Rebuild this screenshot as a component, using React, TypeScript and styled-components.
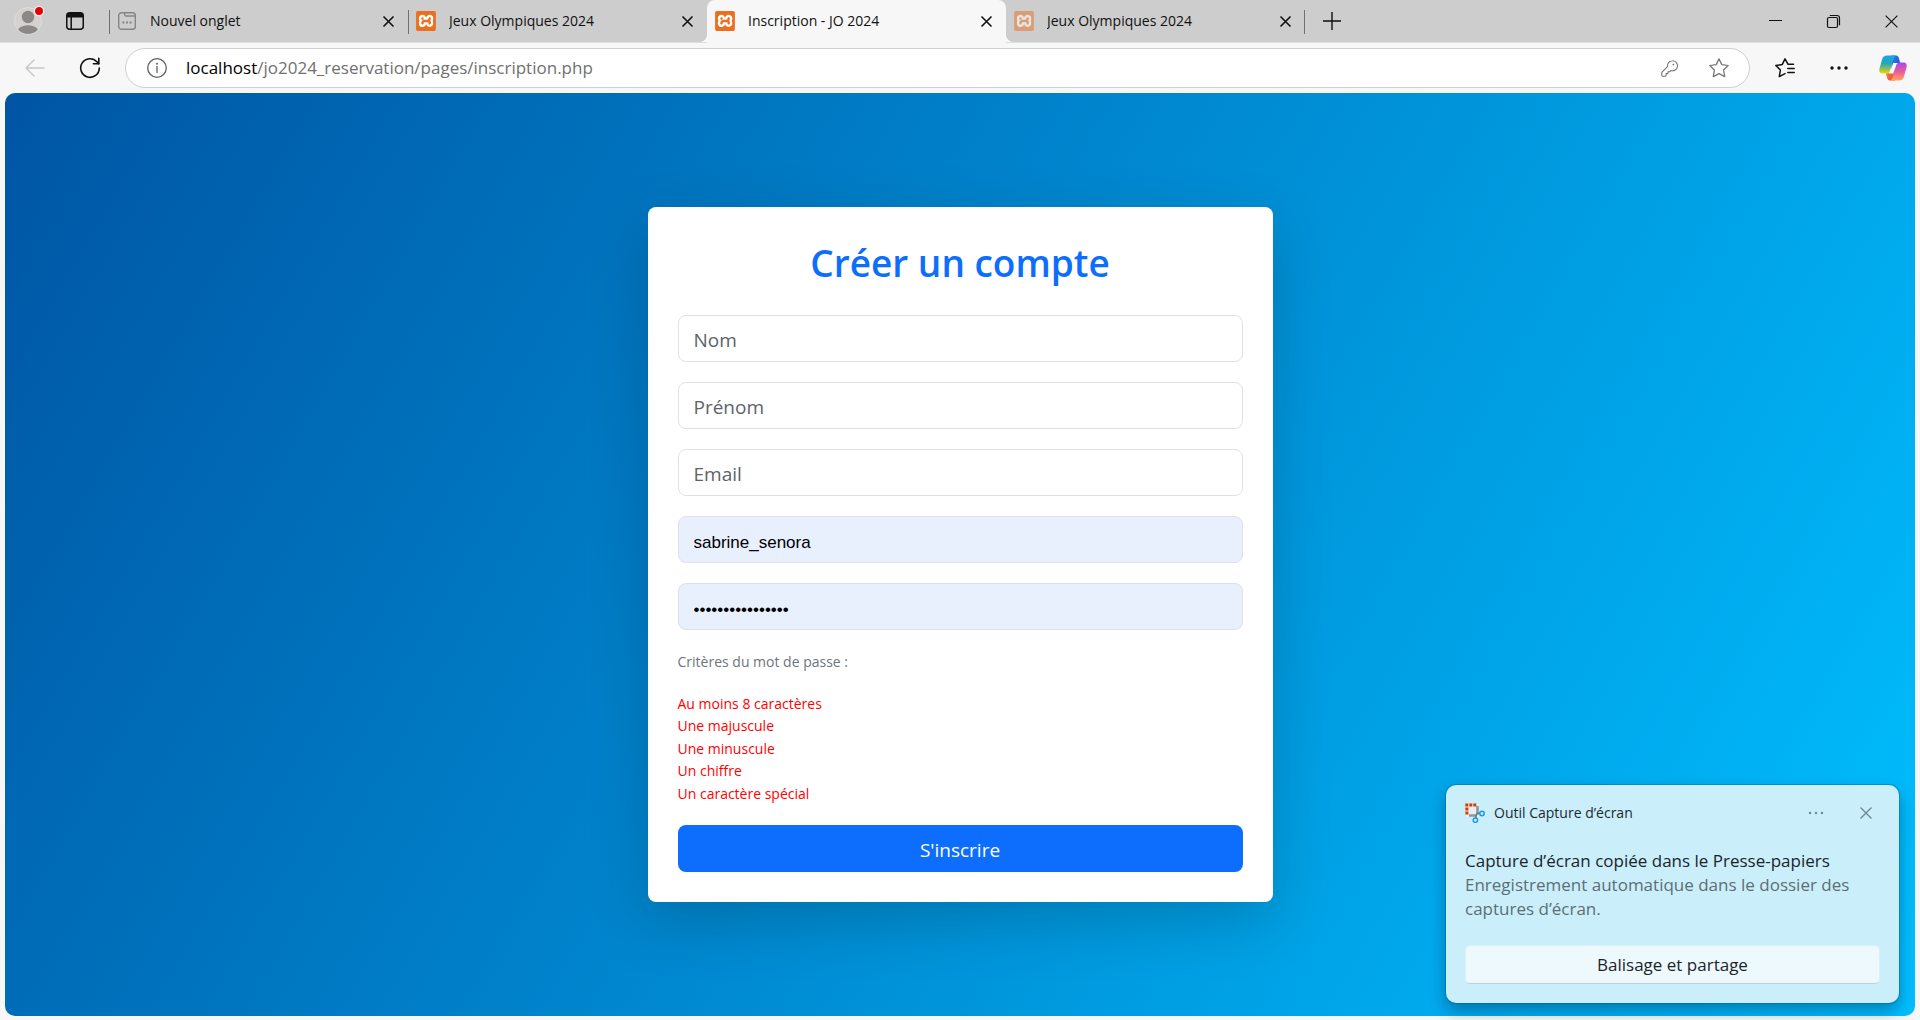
import React from 'react';
import styled, { createGlobalStyle, css } from 'styled-components';
import { SiXampp } from 'react-icons/si';

const uiFont = '"Open Sans", "Noto Sans", sans-serif';

const GlobalStyle = createGlobalStyle`
  *, *::before, *::after { box-sizing: border-box; }
  body { margin: 0; background: #f7f7f7; font-family: ${uiFont}; color: #111; }
  button, input { font-family: inherit; margin: 0; }
`;

const Shell = styled.div`
  position: relative;
  display: flex;
  flex-direction: column;
  min-height: 100vh;
  padding-bottom: 4px;
`;

const IconButton = styled.button<{ $w?: number; $color?: string }>`
  display: inline-flex;
  align-items: center;
  justify-content: center;
  flex: none;
  width: ${(p) => p.$w ?? 32}px;
  height: 32px;
  padding: 0;
  border: 0;
  background: none;
  color: ${(p) => p.$color ?? '#111'};
  svg { display: block; overflow: visible; }
`;

/* ---------- tab strip ---------- */

const TabStrip = styled.header`
  display: flex;
  align-items: center;
  height: 43px;
  background: #cdcdcd;
  border-bottom: 1px solid #dedede;
`;

const StripStart = styled.div`
  display: flex;
  align-items: center;
  gap: 6px;
  width: 109px;
  padding-left: 12px;
  flex: none;
`;

const Tabs = styled.nav`
  display: flex;
  align-self: stretch;
  min-width: 0;
`;

const Tab = styled.div<{ $active?: boolean; $line?: 'left' | 'right' }>`
  position: relative;
  display: flex;
  align-items: center;
  flex: 0 1 299px;
  width: 299px;
  min-width: 0;
  padding: 0 4px 0 8px;
  ${(p) => p.$line && css`
    &::before {
      content: '';
      position: absolute;
      top: 10px;
      bottom: 8px;
      ${p.$line}: 0;
      width: 1px;
      background: #707070;
    }
  `}
  ${(p) => p.$active && css`
    margin-bottom: -1px;
    padding-bottom: 1px;
    background: #f7f7f7;
    border-radius: 8px 8px 0 0;
    &::before, &::after {
      content: '';
      position: absolute;
      bottom: 1px;
      width: 8px;
      height: 8px;
    }
    &::before { right: 100%; background: radial-gradient(circle at 0 0, transparent 8px, #f7f7f7 8px); }
    &::after { left: 100%; background: radial-gradient(circle at 100% 0, transparent 8px, #f7f7f7 8px); }
  `}
`;

const TabTitle = styled.a`
  flex: 1;
  min-width: 0;
  margin-left: 13px;
  overflow: hidden;
  white-space: nowrap;
  font-size: 14px;
  line-height: 20px;
  color: #111;
  text-decoration: none;
`;

const Favicon = styled.span<{ $dim?: boolean }>`
  display: flex;
  flex: none;
  width: 20px;
  height: 20px;
  border-radius: 2px;
  color: #ec6f1f;
  background: linear-gradient(#fff, #fff) center / 14px 14px no-repeat;
  opacity: ${(p) => (p.$dim ? 0.5 : 1)};
  svg { width: 20px; height: 20px; }
`;

const WindowControls = styled.div`
  display: flex;
  align-self: flex-start;
  margin-left: auto;
  padding-top: 5px;
`;

/* ---------- toolbar ---------- */

const Toolbar = styled.div`
  display: flex;
  align-items: center;
  height: 50px;
  padding: 0 11px 0 17px;
`;

const ToolGroup = styled.div<{ $gap: number }>`
  display: flex;
  gap: ${(p) => p.$gap}px;
  flex: none;
`;

const AddressBar = styled.div`
  display: flex;
  align-items: center;
  flex: 1;
  min-width: 0;
  height: 40px;
  margin: 0 19px 0 17px;
  padding: 0 14px 0 15px;
  border: 1px solid #d0d0d0;
  border-radius: 20px;
  background: #fff;
`;

const Url = styled.div`
  flex: 1;
  min-width: 0;
  margin-left: 13px;
  overflow: hidden;
  white-space: nowrap;
  font-size: 17px;
  line-height: 24px;
  color: #707070;
`;

const Host = styled.span`
  color: #000;
`;

/* ---------- page ---------- */

const Page = styled.main`
  display: flex;
  align-items: center;
  justify-content: center;
  flex: 1;
  margin: 0 5px;
  padding: 40px 20px;
  border-radius: 10px;
  background: linear-gradient(120deg, #0055a4, #00bfff);
`;

const Card = styled.form`
  display: flex;
  flex-direction: column;
  gap: 20px;
  width: 100%;
  max-width: 625px;
  padding: 30px;
  border-radius: 8px;
  background: #fff;
  box-shadow: 0 20px 60px rgba(0, 0, 0, 0.18);
`;

const Heading = styled.h1`
  margin: 0 0 8px;
  padding-top: 2px;
  font-size: 37px;
  font-weight: 600;
  line-height: 48px;
  text-align: center;
  color: #0d6efd;
`;

const Field = styled.input<{ $filled?: boolean }>`
  width: 100%;
  height: 47px;
  padding: 4px 15px 2px;
  border: 1px solid #dee2e6;
  border-radius: 8px;
  background: #fff;
  color: #000;
  font-size: 19px;
  outline: 0;
  &::placeholder { color: #5d6369; opacity: 1; }
  ${(p) => p.$filled && css`
    padding-top: 8px;
    background: #e8f0fe;
    font-family: "Liberation Sans", Arial, sans-serif;
    font-size: 17px;
  `}
`;

const Criteria = styled.section`
  font-size: 14px;
`;

const CriteriaTitle = styled.p`
  margin: 0 0 20px;
  line-height: 23px;
  color: #6c757d;
`;

const CriteriaList = styled.ul`
  margin: 0;
  padding: 0;
  list-style: none;
  line-height: 22px;
  color: #f00;
`;

const Criterion = styled.li`
  &:nth-child(even) { padding-bottom: 1px; }
`;

const Submit = styled.button`
  height: 47px;
  padding: 2px 15px 0;
  border: 0;
  border-radius: 8px;
  background: #0d6efd;
  color: #fff;
  font-size: 19px;
`;

/* ---------- notification ---------- */

const Toast = styled.aside`
  position: absolute;
  right: 21px;
  bottom: 17px;
  width: 453px;
  padding: 12px 19px 19px;
  border-radius: 10px;
  background: #cbeefb;
  box-shadow: 0 0 0 1px rgba(0, 80, 120, 0.3), 0 8px 16px rgba(0, 40, 80, 0.4);
`;

const ToastHeader = styled.div`
  display: flex;
  align-items: center;
  gap: 9px;
  margin-right: -2px;
  font-size: 14px;
  line-height: 20px;
  color: #1c2b30;
`;

const ToastApp = styled.span`
  flex: 1;
`;

const ToastActions = styled.div`
  display: flex;
  gap: 18px;
`;

const ToastText = styled.p<{ $muted?: boolean }>`
  margin: 0;
  font-size: 17px;
  line-height: 24px;
  color: ${(p) => (p.$muted ? '#5b6e75' : '#1a2529')};
`;

const ToastBody = styled.div`
  padding: 20px 0 24px;
`;

const ToastAction = styled.button`
  display: block;
  width: 100%;
  height: 39px;
  border: 1px solid #d9f0f7;
  border-bottom-color: #b9d2da;
  border-radius: 5px;
  background: #eef9fd;
  color: #1a2529;
  font-size: 17px;
`;

/* ---------- icons ---------- */

const CloseIcon = ({ size = 11, width = 1.6 }: { size?: number; width?: number }) => (
  <svg width={size} height={size} viewBox="0 0 11 11" fill="none" stroke="currentColor" strokeWidth={width}>
    <path d="M.5 .5 10.5 10.5M10.5 .5 .5 10.5" />
  </svg>
);

const ProfileIcon = () => (
  <svg width="32" height="32" viewBox="0 0 32 32">
    <clipPath id="avatar"><circle cx="16" cy="16" r="13" /></clipPath>
    <circle cx="16" cy="16" r="13.5" fill="#d4d2d0" stroke="#dfddda" />
    <g clipPath="url(#avatar)" fill="#8b8886">
      <circle cx="16" cy="12" r="6.2" />
      <ellipse cx="16" cy="26.5" rx="10.5" ry="6.3" />
    </g>
    <circle cx="27" cy="6" r="4.6" fill="#e60000" stroke="#f3f3f3" strokeWidth="1.2" />
  </svg>
);

const WorkspaceIcon = () => (
  <svg width="18" height="18" viewBox="0 0 18 18" fill="none" stroke="#111" strokeWidth="1.5">
    <rect x=".75" y=".75" width="16.5" height="16.5" rx="3" />
    <path d="M5.2 5v12" />
    <path d="M1 5.6V3.5Q1 1 3.5 1h11Q17 1 17 3.5v2.1z" fill="#111" stroke="none" />
  </svg>
);

const NewTabIcon = () => (
  <svg width="20" height="20" viewBox="0 0 20 20" fill="none" stroke="#858585" strokeWidth="1.4">
    <rect x="1.7" y="1.7" width="16.6" height="16.6" rx="2.8" />
    <path d="M7.6 1.7v1.7q0 1.6 1.6 1.6h9" />
    <path d="M5.4 11.4h2M9 11.4h2M12.6 11.4h2" strokeWidth="2" />
  </svg>
);

const BackIcon = () => (
  <svg width="20" height="18" viewBox="0 0 20 18" fill="none" stroke="currentColor" strokeWidth="1.3" strokeLinecap="round" strokeLinejoin="round">
    <path d="M19 9H1M9 1 1 9l8 8" />
  </svg>
);

const ReloadIcon = () => (
  <svg width="22" height="22" viewBox="0 0 22 22" fill="none" stroke="currentColor" strokeWidth="1.6" strokeLinecap="round" strokeLinejoin="round">
    <path d="M20.3 11A9.3 9.3 0 1 1 17.9 4.8L19.7 6.8" />
    <path d="M19.8 1.4v5.4h-5.4" />
  </svg>
);

const InfoIcon = () => (
  <svg width="20" height="20" viewBox="0 0 20 20" fill="none" stroke="currentColor" strokeWidth="1.3">
    <circle cx="10" cy="10" r="9.3" />
    <path d="M10 8.6v6" strokeLinecap="round" />
    <circle cx="10" cy="5.8" r="1" fill="currentColor" stroke="none" />
  </svg>
);

const KeyIcon = () => (
  <svg width="17" height="17" viewBox="0 0 17 17" fill="none" stroke="currentColor" strokeWidth="1.1" strokeLinejoin="round">
    <path d="M11.2.8a5 5 0 1 1-1.3 9.7L8.6 11.8H6.9v1.8H5.1v1.7q0 .9-.9.9H1.6q-.9 0-.9-.9V13q0-.5.4-.9l5.4-5.4A5 5 0 0 1 11.2.8z" />
    <circle cx="12.4" cy="4.6" r=".9" fill="currentColor" stroke="none" />
  </svg>
);

const StarIcon = () => (
  <svg width="20" height="20" viewBox="0 0 20 20" fill="none" stroke="currentColor" strokeWidth="1.25" strokeLinejoin="round">
    <path d="M10 .9 12.8 6.6 19.2 7.5 14.6 12 15.7 18.6 10 15.6 4.3 18.6 5.4 12 .8 7.5 7.2 6.6z" />
  </svg>
);

const FavoritesIcon = () => (
  <svg width="20" height="20" viewBox="0 0 20 20" fill="none" stroke="currentColor" strokeWidth="1.5" strokeLinejoin="round" strokeLinecap="round">
    <path d="M18.5 6.3h-5.4L10 .9 7.2 6.6.8 7.5 5.4 12 4.3 18.6 10 15.6" />
    <path d="M12.8 10.4h6.4M12.8 14.5h6.4" />
  </svg>
);

const Dots = ({ gap, r }: { gap: number; r: number }) => (
  <svg width="20" height="6" viewBox="0 0 20 6" fill="currentColor">
    <circle cx={10 - gap} cy="3" r={r} />
    <circle cx="10" cy="3" r={r} />
    <circle cx={10 + gap} cy="3" r={r} />
  </svg>
);

const CopilotIcon = () => (
  <svg width="28" height="26" viewBox="0 0 28 26">
    <defs>
      <linearGradient id="cpA" x1="0" y1="0" x2="0" y2="1">
        <stop offset="0" stopColor="#16a5ee" />
        <stop offset=".45" stopColor="#2aa6b8" />
        <stop offset=".75" stopColor="#8bc34a" />
        <stop offset="1" stopColor="#f6d60d" />
      </linearGradient>
      <linearGradient id="cpB" x1="0" y1="0" x2="0" y2="1">
        <stop offset="0" stopColor="#a24bea" />
        <stop offset=".5" stopColor="#ec5a9b" />
        <stop offset="1" stopColor="#ffa65c" />
      </linearGradient>
      <linearGradient id="cpC" x1="0" y1="0" x2="1" y2="1">
        <stop offset="0" stopColor="#2b8ff0" />
        <stop offset="1" stopColor="#1b3fc4" />
      </linearGradient>
      <linearGradient id="cpD" x1="0" y1="0" x2="1" y2="1">
        <stop offset="0" stopColor="#ff9a3c" />
        <stop offset="1" stopColor="#e8403c" />
      </linearGradient>
    </defs>
    <path d="M12 .5h5.2q1.8 0 2.5 2l1.5 5.5h-3.4q-2.6 0-3.4 2.7L12.6 16z" fill="url(#cpC)" />
    <path d="M16 25.5h-5.2q-1.8 0-2.5-2L6.8 18h3.4q2.6 0 3.4-2.7L15.4 10z" fill="url(#cpD)" />
    <path d="M8 .5h9.2q-1.8.3-2.6 2.9l-3.7 12.3q-.8 2.8-3.6 2.8H3.6Q-.6 18.5.5 13.5L3.2 4Q4.2.5 8 .5z" fill="url(#cpA)" />
    <path d="M20 25.5h-9.2q1.8-.3 2.6-2.9l3.7-12.3q.8-2.8 3.6-2.8h3.7q4.2 0 3.1 5L24.8 22q-1 3.5-4.8 3.5z" fill="url(#cpB)" />
    <path d="M14.2 8h4.2q-1.4 1-1.9 2.8l-2.3 7.6H9.800q1.3-.9 1.8-2.7z" fill="#fff" />
  </svg>
);

const SnipIcon = () => (
  <svg width="20" height="20" viewBox="0 0 20 20" fill="none">
    <rect x="1" y="1" width="13" height="13" fill="#e9eef0" />
    <path d="M.3 1.9H12" stroke="#d83b01" strokeWidth="3" strokeDasharray="3 1" />
    <path d="M1.9 4.5V12" stroke="#d83b01" strokeWidth="3" strokeDasharray="3 1" />
    <path d="M12.5 3v8.5M4 12.5h7.5" stroke="#8d979c" strokeWidth="2.6" />
    <path d="m11 11 4-1M11.5 11.5l-1 4" stroke="#6c7a80" strokeWidth="1.5" />
    <circle cx="17" cy="10.5" r="2.2" stroke="#1a9be6" strokeWidth="1.5" />
    <circle cx="10.4" cy="17.2" r="2.2" stroke="#1a9be6" strokeWidth="1.5" />
  </svg>
);

/* ---------- content ---------- */

type TabInfo = { title: string; blank?: boolean; active?: boolean; dim?: boolean; line?: 'left' | 'right' };

const tabs: TabInfo[] = [
  { title: 'Nouvel onglet', blank: true, line: 'left' },
  { title: 'Jeux Olympiques 2024', line: 'left' },
  { title: 'Inscription - JO 2024', active: true },
  { title: 'Jeux Olympiques 2024', dim: true, line: 'right' },
];

const criteria = ['Au moins 8 caractères', 'Une majuscule', 'Une minuscule', 'Un chiffre', 'Un caractère spécial'];

export default function App() {
  return (
    <Shell>
      <GlobalStyle />
      <TabStrip>
        <StripStart>
          <IconButton aria-label="Profil"><ProfileIcon /></IconButton>
          <IconButton $w={50} aria-label="Espaces"><WorkspaceIcon /></IconButton>
        </StripStart>
        <Tabs aria-label="Onglets">
          {tabs.map((tab, i) => (
            <Tab key={i} $active={tab.active} $line={tab.line}>
              {tab.blank ? <NewTabIcon /> : <Favicon $dim={tab.dim}><SiXampp /></Favicon>}
              <TabTitle href="#">{tab.title}</TabTitle>
              <IconButton aria-label="Fermer l'onglet"><CloseIcon /></IconButton>
            </Tab>
          ))}
        </Tabs>
        <IconButton $w={54} aria-label="Nouvel onglet">
          <svg width="18" height="18" viewBox="0 0 18 18" stroke="currentColor" strokeWidth="1.4"><path d="M9 0v18M0 9h18" /></svg>
        </IconButton>
        <WindowControls>
          <IconButton $w={58} aria-label="Réduire">
            <svg width="13" height="13" viewBox="0 0 13 13" stroke="currentColor"><path d="M0 5.5h13" /></svg>
          </IconButton>
          <IconButton $w={58} aria-label="Restaurer">
            <svg width="13" height="13" viewBox="0 0 13 13" fill="none" stroke="currentColor" strokeWidth="1.2">
              <rect x=".5" y="2.5" width="10" height="10" rx="1.5" />
              <path d="M2.8 .5h7.2q2.5 0 2.5 2.5v7.2" />
            </svg>
          </IconButton>
          <IconButton $w={58} aria-label="Fermer"><CloseIcon size={13} width={1} /></IconButton>
        </WindowControls>
      </TabStrip>

      <Toolbar>
        <ToolGroup $gap={19}>
          <IconButton $w={36} $color="#c6c6c6" aria-label="Retour"><BackIcon /></IconButton>
          <IconButton $w={36} aria-label="Actualiser"><ReloadIcon /></IconButton>
        </ToolGroup>
        <AddressBar>
          <IconButton $color="#616161" aria-label="Informations sur le site"><InfoIcon /></IconButton>
          <Url><Host>localhost</Host>/jo2024_reservation/pages/inscription.php</Url>
          <ToolGroup $gap={18}>
            <IconButton $color="#767676" aria-label="Mots de passe"><KeyIcon /></IconButton>
            <IconButton $color="#767676" aria-label="Ajouter aux favoris"><StarIcon /></IconButton>
          </ToolGroup>
        </AddressBar>
        <ToolGroup $gap={22}>
          <IconButton aria-label="Favoris"><FavoritesIcon /></IconButton>
          <IconButton aria-label="Paramètres et plus"><Dots gap={7} r={1.7} /></IconButton>
          <IconButton aria-label="Copilot"><CopilotIcon /></IconButton>
        </ToolGroup>
      </Toolbar>

      <Page>
        <Card onSubmit={(e) => e.preventDefault()}>
          <Heading>Créer un compte</Heading>
          <Field aria-label="Nom" placeholder="Nom" />
          <Field aria-label="Prénom" placeholder="Prénom" />
          <Field type="email" aria-label="Email" placeholder="Email" />
          <Field $filled aria-label="Nom d'utilisateur" defaultValue="sabrine_senora" />
          <Field $filled type="password" aria-label="Mot de passe" defaultValue="................" />
          <Criteria>
            <CriteriaTitle>Critères du mot de passe :</CriteriaTitle>
            <CriteriaList>
              {criteria.map((c) => <Criterion key={c}>{c}</Criterion>)}
            </CriteriaList>
          </Criteria>
          <Submit type="submit">S'inscrire</Submit>
        </Card>
      </Page>

      <Toast>
        <ToastHeader>
          <SnipIcon />
          <ToastApp>Outil Capture d’écran</ToastApp>
          <ToastActions>
            <IconButton $color="#6f8790" aria-label="Options"><Dots gap={6} r={1.2} /></IconButton>
            <IconButton $color="#6f8790" aria-label="Fermer la notification"><CloseIcon size={12} width={1.2} /></IconButton>
          </ToastActions>
        </ToastHeader>
        <ToastBody>
          <ToastText>Capture d’écran copiée dans le Presse-papiers</ToastText>
          <ToastText $muted>Enregistrement automatique dans le dossier des captures d’écran.</ToastText>
        </ToastBody>
        <ToastAction type="button">Balisage et partage</ToastAction>
      </Toast>
    </Shell>
  );
}
